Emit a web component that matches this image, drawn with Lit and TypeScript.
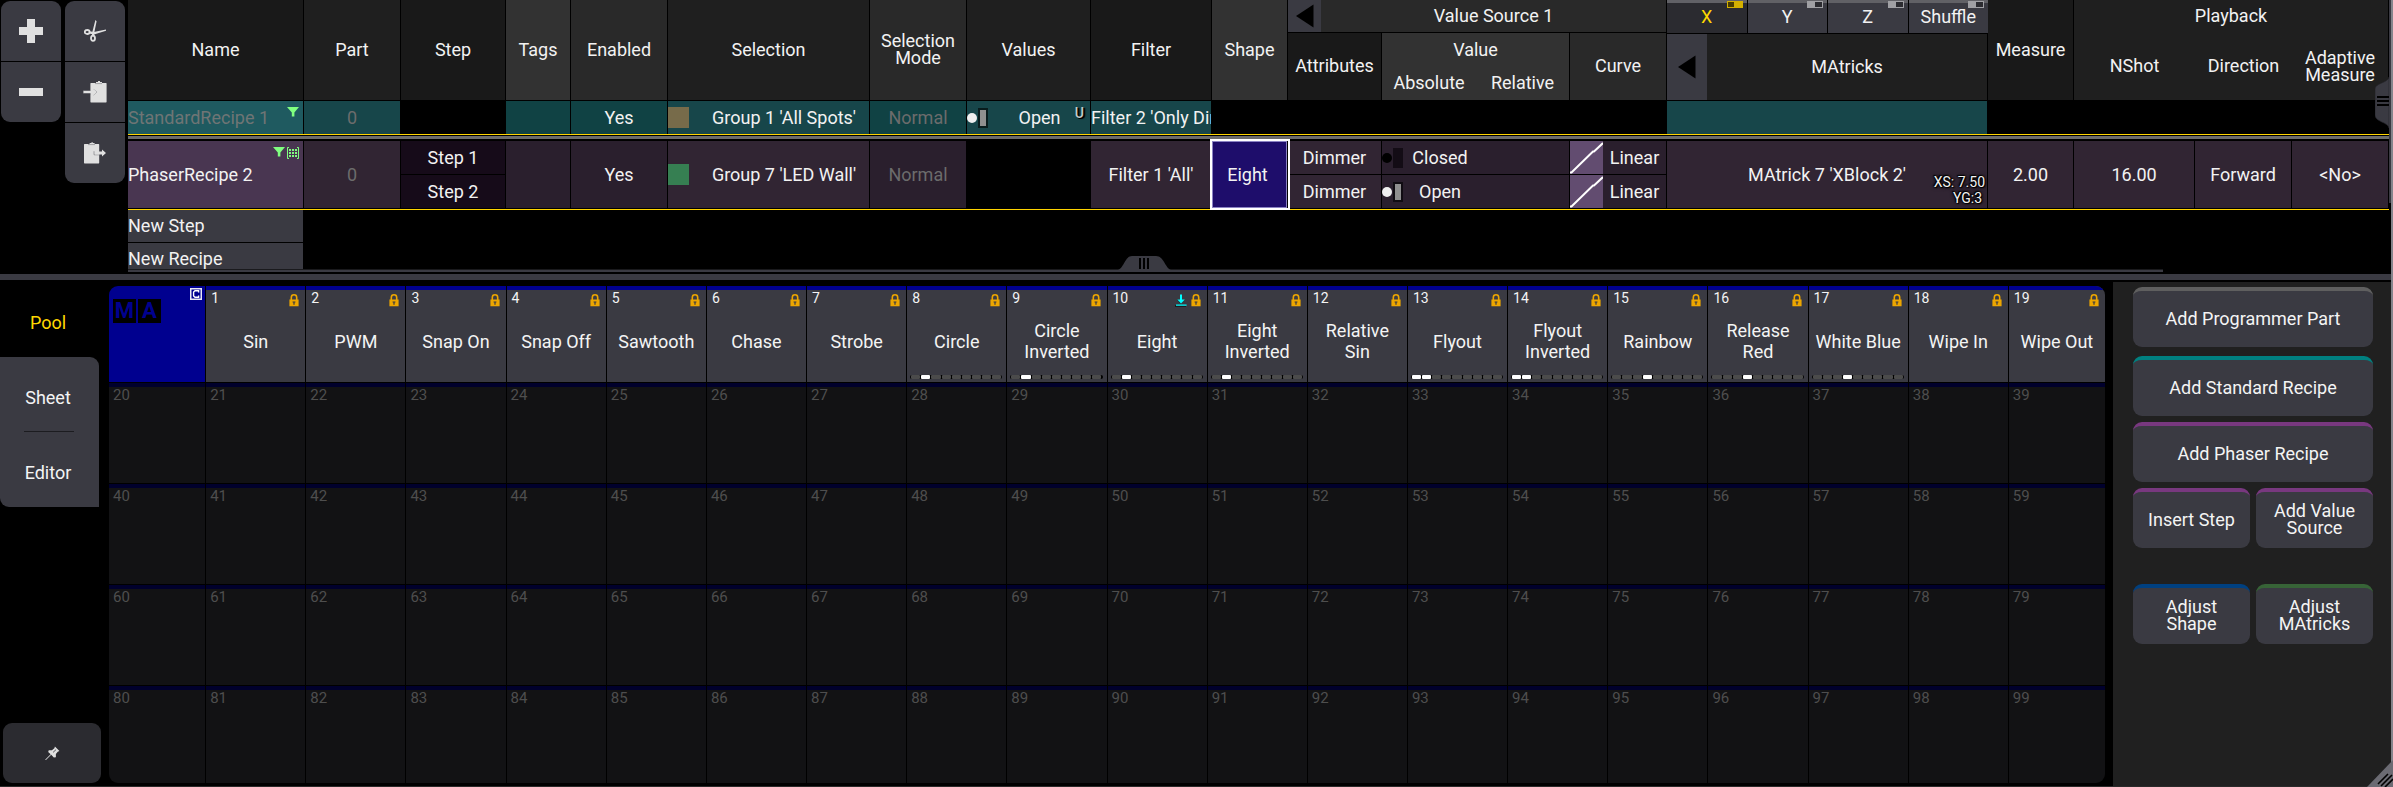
import { LitElement, html, svg, css, nothing } from "lit";
import { customElement, property, state } from "lit/decorators.js";
import { classMap } from "lit/directives/class-map.js";

const COLUMNS = [176, 97, 105, 65, 97, 202, 97, 124, 121, 76, 94, 94, 94, 97, 321, 86, 121, 97, 97];

const SHAPES: { name: string; lit?: number[]; active?: boolean }[] = [
  { name: "Sin" },
  { name: "PWM" },
  { name: "Snap On" },
  { name: "Snap Off" },
  { name: "Sawtooth" },
  { name: "Chase" },
  { name: "Strobe" },
  { name: "Circle", lit: [1] },
  { name: "Circle Inverted", lit: [1] },
  { name: "Eight", lit: [1], active: true },
  { name: "Eight Inverted", lit: [1] },
  { name: "Relative Sin" },
  { name: "Flyout", lit: [0, 1] },
  { name: "Flyout Inverted", lit: [0, 1] },
  { name: "Rainbow", lit: [3] },
  { name: "Release Red", lit: [3] },
  { name: "White Blue", lit: [3] },
  { name: "Wipe In" },
  { name: "Wipe Out" },
];

const icons = {
  plus: html`<svg width="24" height="24" viewBox="0 0 24 24"><path fill="#e0e0e0" d="M8 0h8v8h8v8h-8v8H8v-8H0V8h8z" /></svg>`,
  minus: html`<svg width="24" height="24" viewBox="0 0 24 24"><path fill="#e0e0e0" d="M0 8h24v8H0z" /></svg>`,
  cut: html`<svg width="22" height="22" viewBox="0 0 22 22">
    <g fill="none" stroke="#e0e0e0" stroke-width="1.8">
      <ellipse cx="3.2" cy="12" rx="2.4" ry="2" />
      <ellipse cx="9" cy="18.3" rx="2" ry="2.6" />
    </g>
    <path fill="#e0e0e0" d="M11.4 0 12.6 1.2 10.4 12 10.2 16.5 7.8 15.6 8.2 12.4z" />
    <path fill="#e0e0e0" d="M22 9.6v1.2L10 14.4 5 13.4 5.4 11.2 9.8 12z" />
  </svg>`,
  pasteIn: html`<svg width="24" height="22" viewBox="0 0 24 22">
    <path fill="#e0e0e0" d="M8 2h5V1h2V0h2v1h2v1h4q.6 0 .6.6v18.2q0 .6-.6.6H8q-.6 0-.6-.6V2.6Q7.400 2 8 2z" />
    <path fill="none" stroke="#8e8e92" stroke-width=".8" d="M12 2.600h7M10.600 8.500 14 11l-3.400 3" />
    <path fill="#e0e0e0" d="M.4 9.500h10V8l3.400 3-3.400 3.200v-1.700H.4z" />
    <path fill="#3a3a42" d="M.4 8.900h7v.6h-7zM.4 12.500h7v.7h-7z" />
  </svg>`,
  pasteOut: html`<svg width="24" height="22" viewBox="0 0 24 22">
    <path fill="#e0e0e0" d="M1.600 2h5V1h2V0h1v1h2v1h4q.6 0 .6.6v18.200q0 .6-.6.6h-14q-.6 0-.6-.6V2.600q0-.6.6-.6z" />
    <path fill="none" stroke="#8e8e92" stroke-width=".8" d="M5 2.600h7M11 9.200v3.600h5.400" />
    <path fill="#e0e0e0" d="M12 9.500h7V7.600l4 3.400-4 3.400v-1.900h-7z" />
  </svg>`,
  pin: html`<svg width="15" height="15" viewBox="0 0 16 16">
    <path fill="#e0e0e0" d="M10.600.6 15.400 5.400 13.600 6 11.600 8.400V12L9.400 12.200 6.600 9.400 1 15H.4v-.7L6 8.800 3.400 6.400 4 4.600l3.400-.2L10 2.400z" />
    <path fill="none" stroke="#2b2b30" stroke-width=".8" d="M8.600 6.800 11.800 3.800" />
  </svg>`,
  funnel: html`<svg width="12" height="10" viewBox="0 0 12 10"><path fill="#80ff80" d="M0 0h12L7.400 5.400V9.400H4.800V5.400z" /></svg>`,
  matrix: html`<svg width="12" height="12" viewBox="0 0 12 12">
    <path fill="none" stroke="#80ff80" d="M2 .5H.5v11H2M10 .5h1.500v11H10" />
    <path fill="#80ff80" d="M2 2h2v2H2zM5 2h2v2H5zM8 2h2v2H8zM2 5h2v2H2zM5 5h2v2H5zM8 5h2v2H8zM2 8h2v2H2zM5 8h2v2H5zM8 8h2v2H8z" />
  </svg>`,
  lock: html`<svg width="10" height="13" viewBox="0 0 10 13">
    <path fill="none" stroke="#eda600" stroke-width="1.600" d="M2.300 6V3.400a2.700 2.600 0 0 1 5.400 0V6" />
    <path fill="#eda600" d="M.4 5.400h9.200v6.900H.4z" />
    <path fill="#3a3a42" d="M3.600 7.400h2.800v1.200H5.600v2.200H4.400V8.600h-.8z" />
  </svg>`,
  download: html`<svg width="12" height="13" viewBox="0 0 12 13">
    <path fill="#000" d="M0 11.600h11v1H0zM2 5.600l3.500 4V6z" />
    <path fill="#00ffff" d="M5 .4h2v5h2.800L6 9.400 2.200 5.400H5zM1 10.400h10.600v1.400H1z" />
  </svg>`,
  pool: html`<svg width="12" height="12" viewBox="0 0 12 12">
    <path fill="#e8e8f4" d="M0 0h12v12H0z" />
    <path fill="#00008f" d="M1.500 1.500h9v9h-9z" />
    <path fill="none" stroke="#fff" stroke-width="1.400" d="M8.600 4.400V2.800H5L3.600 4v4L5 9.200h3.600V7.600" />
  </svg>`,
  back: html`<svg width="18" height="24" viewBox="0 0 18 24"><path d="M0 12 17.500.5v23z" /></svg>`,
  curve: html`<svg width="33" height="33" viewBox="0 0 33 33">
    <path fill="#624c70" d="M0 0h33v33H0z" />
    <path fill="none" stroke="#fff" stroke-width="2" d="M0 31.500h1.500L23 10.500h1L33 2" />
  </svg>`,
};

const fader = (open: boolean) => html`<svg width="22" height="20" viewBox="0 0 22 20">
  ${open
    ? svg`<circle cx="5" cy="10" r="5" fill="#efefef"></circle><path fill="#0009" d="M11 0h10v20H11z"></path><path fill="#8f8f8f" d="M13 2h6v16h-6z"></path>`
    : svg`<circle cx="5" cy="10" r="5" fill="#000"></circle><path fill="#130c15" d="M11 0h10v20H11z"></path>`}
</svg>`;

@customElement("recipe-sheet")
class RecipeSheet extends LitElement {
  @state() private axis = "X";

  static styles = css`
    :host {
      display: block;
      min-width: 0;
      position: relative;
    }
    .sheet {
      width: 100%;
      table-layout: fixed;
      border-collapse: separate;
      border-spacing: 0;
      color: #f2f2f2;
    }
    .sheet th,
    .sheet td {
      box-sizing: border-box;
      padding: 0;
      border: 0 solid #000;
      border-width: 0 1px 1px 0;
      font-weight: 400;
      text-align: center;
      vertical-align: middle;
      overflow: hidden;
      white-space: nowrap;
      position: relative;
    }
    .sheet th {
      padding-bottom: 2px;
      white-space: normal;
    }
    .sheet .flush {
      padding: 0;
    }
    .h33 {
      height: 33px;
    }
    .h34 {
      height: 34px;
    }
    .tone1 { background: #191919; }
    .tone2 { background: #1f1f1f; }
    .tone3 { background: #292929; }
    .tone4 { background: #323232; }
    .sheet .open-right { border-right-width: 0; }
    .sheet .open-bottom { border-bottom-width: 0; }
    .sheet .top-gap { border-top-width: 1px; }
    .standard td { border-bottom-width: 0; }
    .standard .a { background: #17464a; }
    .standard .b { background: #104244; }
    .standard .name { background: #1f5a60; color: #6f7575; }
    .phaser .a { background: #312533; }
    .phaser .b { background: #2a1f2d; }
    .phaser .step { background: #160b19; }
    .phaser .name { background: #493651; }
    .sheet .name {
      text-align: left;
    }
    .sheet .dim {
      color: #6c6c6c;
    }
    .sheet .clip {
      text-align: left;
    }
    .sheet .selected {
      background: #1e0d6b;
      outline: 2px solid #fff;
      box-shadow: inset 0 0 0 1px #8b83c4;
      padding-right: 4px;
      z-index: 1;
    }
    .rule-double {
      height: 7px;
      background: linear-gradient(#ffd400 0 1px, #000 1px 2px, #6b6b6b 2px 5px, #000 5px);
    }
    .rule-single {
      height: 2px;
      background: linear-gradient(#000 0 1px, #ffd400 1px);
    }
    .sheet .rule-double,
    .sheet .rule-single {
      border-width: 0;
    }
    .line {
      display: flex;
      align-items: center;
    }
    .line .label {
      flex: 1;
    }
    .line .swatch {
      width: 21px;
      height: 21px;
      margin-right: 10px;
    }
    .spots { background: #776b4a; }
    .wall { background: #367f52; }
    .line svg {
      display: block;
    }
    .unit {
      position: absolute;
      top: 5px;
      right: 6px;
      font-size: 14px;
      font-weight: 500;
      line-height: 14px;
      color: #c4cccc;
      text-shadow: 1px 1px 0 #000, 2px 1px 1px #000;
    }
    .badges {
      position: absolute;
      top: 6px;
      right: 4px;
      display: flex;
      gap: 2px;
      align-items: flex-start;
    }
    .badges svg {
      display: block;
    }
    .details {
      position: absolute;
      right: 2px;
      bottom: 2px;
      text-align: right;
      font-size: 14px;
      line-height: 16px;
      text-shadow: 0 0 2px #000, 0 0 2px #000, 1px 1px 1px #000, -1px -1px 1px #000, 0 0 4px #000;
    }
    .details span {
      display: block;
    }
    .details span + span {
      padding-right: 3px;
    }
    button {
      font: inherit;
      color: inherit;
      border: 0;
      padding: 0;
      margin: 0;
    }
    .split {
      display: flex;
      align-items: stretch;
      height: 100%;
    }
    .split .label {
      flex: 1;
      align-self: center;
      padding-bottom: 2px;
    }
    .back {
      background: #3a3a42;
      display: flex;
      align-items: center;
      justify-content: center;
      width: 33px;
      height: 32px;
    }
    .back.tall {
      width: 40px;
      height: 66px;
    }
    .tabs {
      display: flex;
      gap: 1px;
    }
    .tab {
      flex: 1;
      height: 33px;
      position: relative;
      padding-bottom: 4px;
      background: #3a3a42;
      border-top: 3px solid #616166;
    }
    .tab.on {
      background: #2b2b30;
      color: #ffd800;
    }
    .led {
      position: absolute;
      top: -2px;
      right: 4px;
      width: 16px;
      height: 7px;
      box-sizing: border-box;
      border: 1px solid #a0a0a4;
      background: linear-gradient(90deg, #a0a0a4 50%, #2b2b30 50%);
    }
    .on .led {
      border-color: #d4b000;
      background: linear-gradient(90deg, #4a3d00 45%, #d4b000 45%);
    }
    .new {
      display: block;
      width: 100%;
      height: 32px;
      background: #3a3a42;
      text-align: left;
      padding-bottom: 2px;
    }
    .new.last {
      height: 26px;
      padding: 5px 0 0;
    }
    .sheet .last-cell {
      border-bottom-width: 0;
    }
    .scroll {
      height: 3px;
      width: 90%;
      background: linear-gradient(#1a1a1d 0 1px, #3a3a42 1px);
    }
    .grip {
      position: absolute;
      display: block;
    }
    .grip.low {
      left: 990px;
      bottom: 2px;
    }
    .grip.side {
      right: 0;
      top: 77px;
      z-index: 2;
    }
  `;

  render() {
    return html`
      <table class="sheet">
        <colgroup>
          ${COLUMNS.map((w) => html`<col style="width:${w}px" />`)}
        </colgroup>
        <thead>
          <tr class="h33">
            <th class="tone1" rowspan="3">Name</th>
            <th class="tone2" rowspan="3">Part</th>
            <th class="tone1" rowspan="3">Step</th>
            <th class="tone4" rowspan="3">Tags</th>
            <th class="tone3" rowspan="3">Enabled</th>
            <th class="tone2" rowspan="3">Selection</th>
            <th class="tone3" rowspan="3">Selection Mode</th>
            <th class="tone2" rowspan="3">Values</th>
            <th class="tone1" rowspan="3">Filter</th>
            <th class="tone4" rowspan="3">Shape</th>
            <th class="tone3 flush" colspan="4">
              <div class="split">
                <button class="back" aria-label="Previous value source">${icons.back}</button>
                <span class="label">Value Source 1</span>
              </div>
            </th>
            <th class="flush open-right open-bottom">
              <div class="tabs">
                ${["X", "Y", "Z", "Shuffle"].map(
                  (t) => html`<button
                    class=${classMap({ tab: true, on: this.axis === t })}
                    @click=${() => (this.axis = t)}
                  >${t}<span class="led"></span></button>`
                )}
              </div>
            </th>
            <th class="tone1" rowspan="3">Measure</th>
            <th class="tone2 open-bottom" colspan="3">Playback</th>
          </tr>
          <tr class="h34">
            <th class="tone1" rowspan="2">Attributes</th>
            <th class="tone4 open-bottom" colspan="2">Value</th>
            <th class="tone3" rowspan="2">Curve</th>
            <th class="tone2 flush top-gap" rowspan="2">
              <div class="split">
                <button class="back tall" aria-label="Previous MAtricks page">${icons.back}</button>
                <span class="label">MAtricks</span>
              </div>
            </th>
            <th class="tone2 open-right" rowspan="2">NShot</th>
            <th class="tone2 open-right" rowspan="2">Direction</th>
            <th class="tone2" rowspan="2">Adaptive Measure</th>
          </tr>
          <tr class="h34">
            <th class="tone4 open-right">Absolute</th>
            <th class="tone4">Relative</th>
          </tr>
        </thead>
        <tbody>
          <tr class="standard h33">
            <td class="name">StandardRecipe 1<span class="badges">${icons.funnel}</span></td>
            <td class="a dim">0</td>
            <td></td>
            <td class="b"></td>
            <td class="b">Yes</td>
            <td class="a"><div class="line"><span class="swatch spots"></span><span class="label">Group 1 'All Spots'</span></div></td>
            <td class="b dim">Normal</td>
            <td class="a"><div class="line">${fader(true)}<span class="label">Open</span></div><span class="unit">U</span></td>
            <td class="a clip">Filter 2 'Only Dimmer'</td>
            <td></td>
            <td></td>
            <td colspan="2"></td>
            <td></td>
            <td class="a"></td>
            <td></td>
            <td></td>
            <td></td>
            <td></td>
          </tr>
          <tr><td class="rule-double" colspan="19"></td></tr>
          <tr class="phaser h34">
            <td class="name open-bottom" rowspan="2">PhaserRecipe 2<span class="badges">${icons.funnel}${icons.matrix}</span></td>
            <td class="a dim open-bottom" rowspan="2">0</td>
            <td class="step">Step 1</td>
            <td class="b open-bottom" rowspan="2"></td>
            <td class="b open-bottom" rowspan="2">Yes</td>
            <td class="a open-bottom" rowspan="2"><div class="line"><span class="swatch wall"></span><span class="label">Group 7 'LED Wall'</span></div></td>
            <td class="b dim open-bottom" rowspan="2">Normal</td>
            <td class="open-bottom" rowspan="2"></td>
            <td class="a open-bottom" rowspan="2">Filter 1 'All'</td>
            <td class="selected open-bottom" rowspan="2">Eight</td>
            <td class="a">Dimmer</td>
            <td class="b open-right"><div class="line">${fader(false)}<span class="label">Closed</span></div></td>
            <td class="b"></td>
            <td class="b"><div class="line">${icons.curve}<span class="label">Linear</span></div></td>
            <td class="a open-bottom" rowspan="2">
              MAtrick 7 'XBlock 2'
              <div class="details"><span>XS: 7.50</span><span>YG:3</span></div>
            </td>
            <td class="a open-bottom" rowspan="2">2.00</td>
            <td class="a open-bottom" rowspan="2">16.00</td>
            <td class="a open-bottom" rowspan="2">Forward</td>
            <td class="a open-bottom" rowspan="2">&lt;No&gt;</td>
          </tr>
          <tr class="phaser h33">
            <td class="step open-bottom">Step 2</td>
            <td class="a open-bottom">Dimmer</td>
            <td class="b open-right open-bottom"><div class="line">${fader(true)}<span class="label">Open</span></div></td>
            <td class="b open-bottom"></td>
            <td class="b open-bottom"><div class="line">${icons.curve}<span class="label">Linear</span></div></td>
          </tr>
          <tr><td class="rule-single" colspan="19"></td></tr>
          <tr><td><button class="new">New Step</button></td></tr>
          <tr><td class="last-cell"><button class="new last">New Recipe</button></td></tr>
        </tbody>
      </table>
      <div class="scroll"></div>
      <svg class="grip low" width="54" height="14" viewBox="0 0 54 14">
        <path fill="#3a3a42" d="M0 14C6 12 7 0 14 0h24c8 0 9 12 15 14z" />
        <path d="M21 2h2v11h-2zM25 2h2v11h-2zM29 2h2v11h-2z" />
      </svg>
      <svg class="grip side" width="14" height="52" viewBox="0 0 14 52">
        <path fill="#3a3a42" stroke="#222226" stroke-width=".6" d="M14 0C13 6 0 6 0 12v26c0 7 13 7 14 13z" />
        <path d="M2 19h12v2H2zM2 23h12v2H2zM2 27h12v2H2z" />
      </svg>
    `;
  }
}

@customElement("shape-cell")
class ShapeCell extends LitElement {
  @property({ type: Number }) number = 0;
  @property() name = "";
  @property({ attribute: false }) lit: number[] | undefined;
  @property({ type: Boolean }) active = false;

  static styles = css`
    :host {
      display: flex;
      min-width: 0;
      overflow: hidden;
    }
    .cell {
      flex: 1;
      min-width: 0;
      display: flex;
      flex-direction: column;
      font: inherit;
      padding: 0;
      border: 0;
      border-top: 4px solid #00002c;
      background: #121214;
      color: #4e4e4e;
      text-align: center;
    }
    .filled {
      background: #3a3a42;
      border-top-color: #00008f;
      color: #f4f4f4;
    }
    .head {
      display: flex;
      align-items: flex-start;
      gap: 4px;
      height: 16px;
      padding: 0 6px 0 4px;
      font-size: 15px;
      line-height: 17px;
    }
    .filled .head {
      font-size: 14px;
      padding-left: 5px;
    }
    .index {
      flex: 1;
      text-align: left;
    }
    .head svg {
      display: block;
      margin-top: 4px;
    }
    .label {
      flex: 1;
      display: flex;
      align-items: center;
      justify-content: center;
      padding: 1px 4px 0;
      line-height: 21px;
    }
    .foot {
      height: 7px;
      padding: 0 4px 0 3px;
      display: flex;
    }
    .track {
      flex: 1;
      height: 4px;
      display: flex;
      gap: 1px;
      padding: 0 1px;
      background: #000;
      border-radius: 2px;
    }
    .seg {
      flex: 1;
      border-radius: 1px;
      background: #4b4b4b;
    }
    .seg.on {
      background: #fff;
    }
  `;

  render() {
    const filled = !!this.name;
    return html`<button class=${classMap({ cell: true, filled })}>
      <span class="head"><span class="index">${this.number}</span>${this.active ? icons.download : nothing}${filled ? icons.lock : nothing}</span>
      ${filled ? html`<span class="label">${this.name}</span>
      <span class="foot">${this.lit
        ? html`<span class="track">${Array.from({ length: 9 }, (_, i) => html`<span class=${classMap({ seg: true, on: this.lit!.includes(i) })}></span>`)}</span>`
        : nothing}</span>` : nothing}
    </button>`;
  }
}

@customElement("shape-pool")
class ShapePool extends LitElement {
  static styles = css`
    :host {
      display: grid;
      grid-template-columns: 96fr repeat(18, 99fr) 96fr;
      grid-template-rows: 96fr 100fr 100fr 100fr 97fr;
      gap: 1px;
      border-radius: 9px;
      overflow: hidden;
    }
    .title {
      background: #00008f;
      position: relative;
      padding: 13px 4px 0;
      display: flex;
      align-items: flex-start;
      gap: 2px;
    }
    .mark {
      flex: none;
      width: 23px;
      height: 24px;
      line-height: 24px;
      text-align: center;
      font-weight: 700;
      font-size: 22px;
      background: #000;
      color: #00008f;
    }
    .corner {
      position: absolute;
      top: 2px;
      right: 3px;
      display: flex;
    }
  `;

  render() {
    return html`
      <div class="title">
        <span class="mark">M</span><span class="mark">A</span>
        <span class="corner">${icons.pool}</span>
      </div>
      ${Array.from({ length: 99 }, (_, i) => {
        const shape = SHAPES[i];
        return html`<shape-cell .number=${i + 1} .name=${shape?.name ?? ""} .lit=${shape?.lit} .active=${!!shape?.active}></shape-cell>`;
      })}
    `;
  }
}

@customElement("app-root")
class AppRoot extends LitElement {
  static styles = css`
    :host {
      box-sizing: border-box;
      display: flex;
      flex-direction: column;
      min-height: 100vh;
      position: relative;
      background: #000;
      border-right: 2px solid #85858c;
      border-bottom: 1px solid #2a2a2a;
      font-family: Roboto, "Liberation Sans", sans-serif;
      font-size: 18px;
      line-height: 17px;
      color: #f4f4f4;
    }
    button {
      font: inherit;
      color: inherit;
      border: 0;
      padding: 0;
      margin: 0;
      background: #3a3a42;
    }
    .top {
      display: flex;
      align-items: flex-start;
      padding-bottom: 2px;
    }
    .tools {
      display: flex;
      align-items: flex-start;
      gap: 4px;
      padding: 1px 3px 0 1px;
    }
    .stack {
      display: flex;
      flex-direction: column;
      gap: 1px;
      border-radius: 9px;
      overflow: hidden;
    }
    .tool {
      width: 60px;
      height: 60px;
      display: flex;
      align-items: center;
      justify-content: center;
    }
    recipe-sheet {
      flex: 1;
    }
    .vbar {
      width: 2px;
      height: 203px;
      background: #3a3a42;
    }
    .divider {
      height: 6px;
      background: #3a3a42;
    }
    .bottom {
      flex: 1;
      display: flex;
    }
    .views {
      width: 109px;
      display: flex;
      flex-direction: column;
      padding: 2px 0 3px;
      box-sizing: border-box;
    }
    .view {
      width: 99px;
      height: 75px;
      padding: 6px 3px 0 0;
      position: relative;
    }
    .view.on {
      background: none;
      color: #ffd800;
    }
    .view.sheet {
      border-radius: 0 9px 0 0;
    }
    .view.sheet::after {
      content: "";
      position: absolute;
      left: 24px;
      right: 25px;
      bottom: 0;
      height: 1px;
      background: #1c1c20;
    }
    .view.editor {
      border-radius: 0 0 0 9px;
    }
    .pin {
      margin: auto 8px 0 3px;
      height: 60px;
      background: #2b2b30;
      border-radius: 9px;
      display: flex;
      align-items: center;
      justify-content: center;
    }
    shape-pool {
      flex: 1;
      min-width: 0;
      margin: 6px 8px 3px 0;
    }
    .actions {
      box-sizing: border-box;
      width: 278px;
      margin-top: 2px;
      padding: 5px 18px 0 20px;
      background: #202020;
      display: flex;
      flex-direction: column;
      gap: 9px;
    }
    .group {
      display: grid;
      grid-template-columns: 1fr 1fr;
      grid-auto-rows: 60px;
      gap: 6px;
    }
    .later {
      margin-top: 27px;
    }
    .action {
      border-radius: 9px;
      border-top: 4px solid #5f5f5f;
      padding-bottom: 2px;
    }
    .wide {
      grid-column: span 2;
    }
    .teal { border-top-color: #008080; }
    .violet { border-top-color: #78387f; }
    .blue { border-top-color: #004080; }
    .green { border-top-color: #376337; }
    .resize {
      position: absolute;
      right: -2px;
      bottom: -1px;
      display: block;
    }
  `;

  render() {
    return html`
      <section class="top">
        <div class="tools">
          <div class="stack">
            <button class="tool" aria-label="Add">${icons.plus}</button>
            <button class="tool" aria-label="Remove">${icons.minus}</button>
          </div>
          <div class="stack">
            <button class="tool" aria-label="Cut">${icons.cut}</button>
            <button class="tool" aria-label="Paste in">${icons.pasteIn}</button>
            <button class="tool" aria-label="Copy out">${icons.pasteOut}</button>
          </div>
        </div>
        <recipe-sheet></recipe-sheet>
        <div class="vbar"></div>
      </section>
      <div class="divider"></div>
      <section class="bottom">
        <nav class="views">
          <button class="view on">Pool</button>
          <button class="view sheet">Sheet</button>
          <button class="view editor">Editor</button>
          <button class="pin" aria-label="Pin">${icons.pin}</button>
        </nav>
        <shape-pool></shape-pool>
        <aside class="actions">
          <div class="group">
            <button class="action wide">Add Programmer Part</button>
          </div>
          <div class="group">
            <button class="action wide teal">Add Standard Recipe</button>
            <button class="action wide violet">Add Phaser Recipe</button>
            <button class="action violet">Insert Step</button>
            <button class="action violet">Add Value<br />Source</button>
          </div>
          <div class="group later">
            <button class="action blue">Adjust<br />Shape</button>
            <button class="action green">Adjust<br />MAtricks</button>
          </div>
        </aside>
      </section>
      <svg class="resize" width="26" height="27" viewBox="0 0 26 27">
        <path fill="#6b6b73" d="M0 27 26 0v27z" />
        <path stroke="#000" stroke-width="1.600" d="M11 24 21 14M14 26 25 15M18 27 26 19" />
      </svg>
    `;
  }
}
